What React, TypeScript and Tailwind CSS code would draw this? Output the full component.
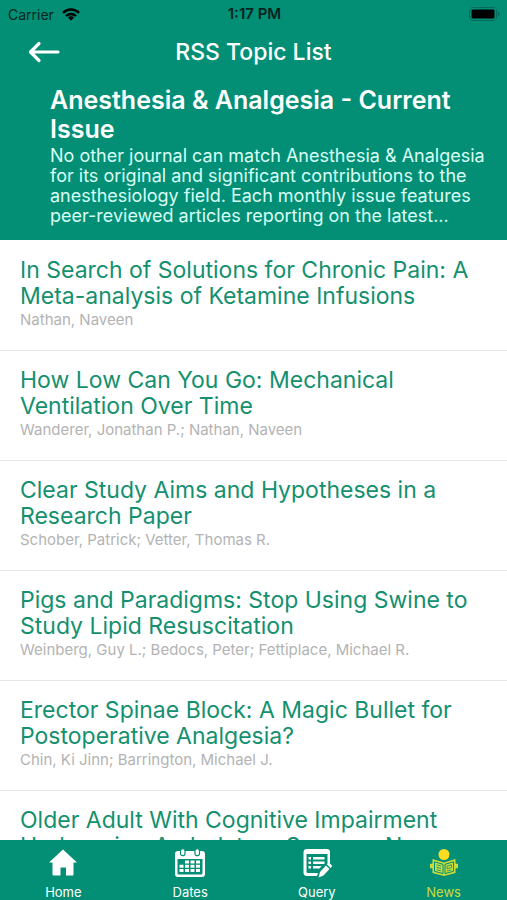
import React, { useState } from "react";

interface Article {
  title: string;
  authors?: string;
}

const articles: Article[] = [
  {
    title: "In Search of Solutions for Chronic Pain: A Meta-analysis of Ketamine Infusions",
    authors: "Nathan, Naveen",
  },
  {
    title: "How Low Can You Go: Mechanical Ventilation Over Time",
    authors: "Wanderer, Jonathan P.; Nathan, Naveen",
  },
  {
    title: "Clear Study Aims and Hypotheses in a Research Paper",
    authors: "Schober, Patrick; Vetter, Thomas R.",
  },
  {
    title: "Pigs and Paradigms: Stop Using Swine to Study Lipid Resuscitation",
    authors: "Weinberg, Guy L.; Bedocs, Peter; Fettiplace, Michael R.",
  },
  {
    title: "Erector Spinae Block: A Magic Bullet for Postoperative Analgesia?",
    authors: "Chin, Ki Jinn; Barrington, Michael J.",
  },
  {
    title: "Older Adult With Cognitive Impairment Undergoing Ambulatory Surgery: New",
  },
];

const HomeIcon = () => (
  <svg viewBox="0 0 30 30" className="size-[30px]" fill="currentColor" aria-hidden="true">
    <path d="M15 1.5 29 14.5H25.5V26.5a1 1 0 0 1-1 1H18V19.5H12.5V27.5H5.5a1 1 0 0 1-1-1V14.5H1Z" />
  </svg>
);

const DatesIcon = () => (
  <svg viewBox="0 0 30 30" className="size-[30px]" aria-hidden="true">
    <path
      fill="currentColor"
      fillRule="evenodd"
      d="M3 3H27a3 3 0 0 1 3 3V26a3 3 0 0 1-3 3H3a3 3 0 0 1-3-3V6a3 3 0 0 1 3-3ZM2.5 11V25a1.5 1.5 0 0 0 1.5 1.5H26a1.5 1.5 0 0 0 1.5-1.5V11Z"
    />
    <g fill="currentColor" stroke="#028f76" strokeWidth="1.2">
      <rect x="5.5" y=".6" width="4.5" height="7" rx="2.2" />
      <rect x="20" y=".6" width="4.5" height="7" rx="2.2" />
    </g>
    <path
      fill="currentColor"
      d="M10 12.500h4v3h-4zM15.500 12.500h4v3h-4zM21 12.500h4v3h-4zM4.500 16.800h4v3h-4zM10 16.800h4v3h-4zM15.500 16.800h4v3h-4zM21 16.800h4v3h-4zM4.500 21h4v3h-4zM10 21h4v3h-4zM15.500 21h4v3h-4zM21 21h4v3h-4z"
    />
  </svg>
);

const QueryIcon = () => (
  <svg viewBox="0 0 30 30" className="size-[30px]" fill="currentColor" aria-hidden="true">
    <path
      fillRule="evenodd"
      d="M4 1H25a3 3 0 0 1 3 3V14.500L25.500 17V6H4.500V23.500a1.500 1.500 0 0 0 1.500 1.500H16L15 28H5a3.500 3.500 0 0 1-3.500-3.500V4A3 3 0 0 1 4 1Z"
    />
    <path d="M6.500 9h2.500v2.500H6.500zM11 9h11.500v2.500H11zM6.500 13.500h2.500v2.500H6.500zM11 13.500h11.500v2.500H11zM6.500 18h2.500v2.500H6.500zM11 18h8.500l-2 2.500H11z" />
    <path d="M26 15.500a1.500 1.500 0 0 1 2 0L29.500 17a1.500 1.500 0 0 1 0 2L28.500 20 25 16.500ZM24 17.500 27.500 21 21.500 27.500 16.500 29.500 18 24Z" />
  </svg>
);

const NewsIcon = () => (
  <svg viewBox="0 0 30 30" className="size-[30px]" aria-hidden="true">
    <circle cx="15" cy="6.500" r="5.500" fill="#fbdc21" />
    <path
      fill="#c9dc3c"
      d="M3.500 11 15 14.500 26.500 11V15.500L29 16V20L26.500 20.500V25L15 28 3.500 25V20.500L1 20V16L3.500 15.500Z"
    />
    <g fill="none" stroke="#028f76">
      <path strokeWidth="1" d="M5.500 13.800 14 16.300V25.600L5.500 23.300ZM24.500 13.800 16 16.300V25.600L24.500 23.300Z" />
      <path strokeWidth=".8" d="M7.500 16.800 12 18.100M7.500 19.200 12 20.500M7.500 21.600 12 22.900M18 18.100 22.500 16.800V19.500L18 20.800ZM18 23 22.500 21.800" />
    </g>
  </svg>
);

const tabs = [
  { label: "Home", Icon: HomeIcon },
  { label: "Dates", Icon: DatesIcon },
  { label: "Query", Icon: QueryIcon },
  { label: "News", Icon: NewsIcon },
];

const StatusBar = () => (
  <div className="grid grid-cols-3 items-center h-7 pl-2 pr-1.5 text-[#02241e]">
    <div className="flex items-center gap-2 text-[14px]">
      <span>Carrier</span>
      <svg viewBox="0 0 18 13" className="w-[18px] h-[13px]" fill="none" stroke="#000" aria-hidden="true">
        <path strokeWidth="2.400" d="M1 4.800a11.500 11.500 0 0 1 16 0M4 8a7.200 7.200 0 0 1 10 0" />
        <path fill="#000" stroke="none" d="M9 12.800 5.900 9.600a4.500 4.500 0 0 1 6.200 0Z" />
      </svg>
    </div>
    <span className="text-center text-[15px] font-semibold">1:17 PM</span>
    <svg viewBox="0 0 32 14" className="w-8 h-3.5 justify-self-end" aria-hidden="true">
      <rect x=".5" y=".5" width="27" height="13" rx="3.500" fill="none" stroke="#026b59" />
      <rect x="2.500" y="2.500" width="23" height="9" rx="1.500" fill="#000" />
      <path d="M29 4.500a2.700 2.700 0 0 1 0 5Z" fill="#026b59" />
    </svg>
  </div>
);

const ArticleRow: React.FC<Article> = ({ title, authors }) => (
  <li className="border-b border-[#e6e6e6]">
    <a href="#" className="block px-5 pt-4 pb-5">
      <h3 className="text-[23px] leading-[26px] text-[#14906f]">{title}</h3>
      {authors && (
        <p className="text-[15px] leading-[21px] text-[#b3b3b3]">{authors}</p>
      )}
    </a>
  </li>
);

export default function App() {
  const [active, setActive] = useState("News");

  return (
    <div className="flex flex-col h-screen bg-white font-[Inter,sans-serif]">
      <header className="shrink-0 bg-[#028f76] text-white pb-3.5">
        <StatusBar />
        <div className="grid grid-cols-[60px_1fr_60px] items-center h-12">
          <button aria-label="Back" className="justify-self-end">
            <svg viewBox="0 0 32 22" className="w-8 h-[22px]" fill="none" stroke="currentColor" strokeWidth="3.200" aria-hidden="true">
              <path strokeLinecap="round" strokeLinejoin="round" d="M11 2.500 2.500 11 11 19.500M3 11H30" />
            </svg>
          </button>
          <h1 className="text-center text-[23px] leading-7 font-medium">RSS Topic List</h1>
        </div>
        <div className="pl-[50px] pr-4 pt-2.5">
          <h2 className="text-[25px] leading-[29px] font-semibold">
            Anesthesia &amp; Analgesia - Current Issue
          </h2>
          <p className="mt-0.5 text-[18px] leading-[20px] text-[#d8fff6]">
            No other journal can match Anesthesia &amp; Analgesia for its original and
            significant contributions to the anesthesiology field. Each monthly issue
            features peer-reviewed articles reporting on the latest...
          </p>
        </div>
      </header>

      <main className="flex-1 min-h-0 overflow-y-auto [scrollbar-width:none]">
        <ul className="pt-px">
          {articles.map((article) => (
            <ArticleRow key={article.title} {...article} />
          ))}
        </ul>
      </main>

      <nav className="grid grid-cols-4 shrink-0 h-[60px] bg-[#028f76]">
        {tabs.map(({ label, Icon }) => (
          <button
            key={label}
            onClick={() => setActive(label)}
            className={`flex flex-col items-center pt-2 gap-1.5 ${
              active === label ? "text-[#c9dc3c]" : "text-white"
            }`}
          >
            <Icon />
            <span className="text-[13px] leading-4">{label}</span>
          </button>
        ))}
      </nav>
    </div>
  );
}
